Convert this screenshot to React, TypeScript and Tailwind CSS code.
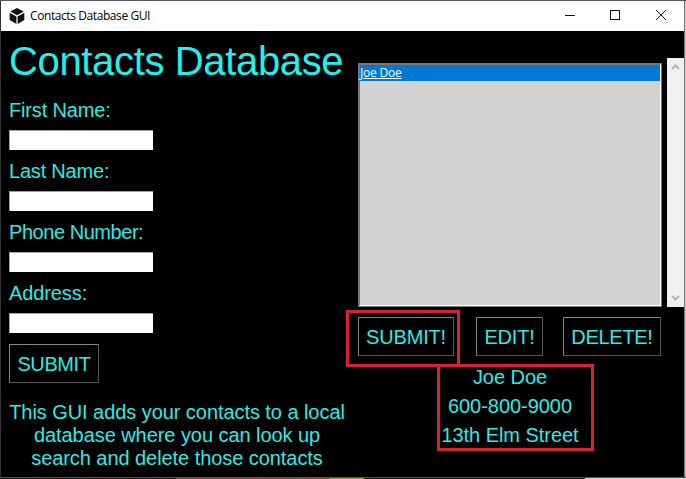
import React from "react";

function Field({ label, tracking }: { label: string; tracking: string }) {
  return (
    <label className="block h-[61px]">
      <span className={`block h-[33px] whitespace-nowrap pt-px text-[20px] leading-[24px] ${tracking}`}>{label}</span>
      <input className="block h-5 w-36 border-l border-t border-[#a0a0a0] bg-white px-1 text-sm text-black outline-none" />
    </label>
  );
}

function Button({ children, className }: { children: React.ReactNode; className: string }) {
  return (
    <button
      className={`flex h-[39px] shrink-0 items-center justify-center whitespace-nowrap border border-[#555] border-l-[#858585] border-t-[#858585] pt-px text-[20px] leading-6 ${className}`}
    >
      {children}
    </button>
  );
}

function TitleBar() {
  return (
    <header className="flex h-[30px] shrink-0 items-center bg-white pl-2 text-black">
      <svg className="h-4 w-4 shrink-0" viewBox="0 0 16 16">
        <path d="M8 0 14.7 3.6 8 7.3 1.3 3.6Z" fill="#111" />
        <path d="M.7 4.7 7.4 8.4V16L.7 12.1Z" fill="#111" />
        <path d="M15.3 4.7 8.6 8.4V16l6.7-3.9Z" fill="#111" />
      </svg>
      <h1 className="ml-[5px] grow whitespace-nowrap pb-px font-['Open_Sans',sans-serif] text-[12px] leading-4 tracking-[-0.41px]">
        Contacts Database GUI
      </h1>
      <svg className="h-[30px] w-[136px] shrink-0" viewBox="0 0 136 30" fill="none" stroke="#111" shapeRendering="crispEdges">
        <path d="M17 14.5h10" />
        <rect x="62.5" y="9.5" width="9" height="9" />
        <path d="m108 9 10 10m0-10-10 10" shapeRendering="auto" />
      </svg>
    </header>
  );
}

export default function App() {
  return (
    <div className="flex h-[479px] w-[686px] flex-col overflow-hidden bg-[#707070] font-['Liberation_Sans',Arial,sans-serif] text-[#2fe9e5]">
      <div className="h-px shrink-0 bg-[#555]" />
      <div className="flex h-[476px] shrink-0">
        <div className="w-px bg-[#333]" />
        <div className="flex w-[683px] flex-col bg-black">
          <TitleBar />
          <main className="relative flex grow">
            <section className="w-[349px] shrink-0 pl-2">
              <h2 className="h-[63px] whitespace-nowrap pt-[7px] text-[40px] leading-[46px] tracking-[-0.35px] text-[#20f1ef]">
                Contacts Database
              </h2>
              <div className="pt-[3px]">
                <Field label="First Name:" tracking="tracking-[-0.15px]" />
                <Field label="Last Name:" tracking="tracking-[-0.2px]" />
                <Field label="Phone Number:" tracking="tracking-[-0.45px]" />
                <Field label="Address:" tracking="tracking-[-0.1px]" />
              </div>
              <Button className="mt-[3px] w-[90px] tracking-[-0.4px]">SUBMIT</Button>
              <p className="mt-[18px] w-[336px] whitespace-nowrap text-center text-[20px] leading-[23px] tracking-[-0.06px]">
                <span className="block">This GUI adds your contacts to a local</span>
                <span className="block">database where you can look up</span>
                <span className="block">search and delete those contacts</span>
              </p>
            </section>
            <section className="flex w-[334px] flex-col pl-2">
              <div className="mt-[27px] flex h-[249px] w-[326px] justify-between">
                <div className="mt-[5px] h-[244px] w-[304px] border border-[#777]">
                  <div className="h-full border border-b-white border-l-[#777] border-r-white border-t-[#777] bg-[#d3d3d3]">
                    <div className="h-4 bg-[#0078d7] font-['Open_Sans',sans-serif] text-[12px] leading-4 tracking-[-0.2px] text-white underline">
                      Joe Doe
                    </div>
                  </div>
                </div>
                <div className="flex w-[17px] flex-col items-center justify-between bg-[#f0f0f0] py-[6px]">
                  <svg className="h-[6px] w-[9px]" viewBox="0 0 9 6" fill="none" stroke="#b3b3b3" strokeWidth="2">
                    <path d="m1 5 3.5-3.5L8 5" />
                  </svg>
                  <svg className="h-[6px] w-[9px]" viewBox="0 0 9 6" fill="none" stroke="#b3b3b3" strokeWidth="2">
                    <path d="m1 1 3.5 3.5L8 1" />
                  </svg>
                </div>
              </div>
              <div className="mt-[10px] flex w-[303px] justify-between">
                <Button className="w-24 tracking-[-0.15px]">SUBMIT!</Button>
                <Button className="ml-[2px] w-[67px] tracking-[-0.2px]">EDIT!</Button>
                <Button className="w-[98px] tracking-[-0.3px]">DELETE!</Button>
              </div>
              <div className="mt-[7px] w-[304px] whitespace-nowrap text-center text-[20px] leading-[29px] tracking-[-0.04px]">
                <div>Joe Doe</div>
                <div>600-800-9000</div>
                <div>13th Elm Street</div>
              </div>
            </section>
            <div className="pointer-events-none absolute left-[345px] top-[279px] h-[57px] w-[114px] border-[3px] border-[#d4252f]" />
            <div className="pointer-events-none absolute left-[436px] top-[333px] h-[87px] w-[157px] border-[3px] border-[#d4252f]" />
          </main>
        </div>
        <div className="w-px bg-[#777]" />
        <div className="w-px bg-[#c8c8c8]" />
      </div>
      <div className="h-px shrink-0 bg-[#555]" />
      <div className="flex h-px shrink-0">
        <div className="w-[176px] bg-[#151010]" />
        <div className="w-[154px] bg-[#744a38]" />
        <div className="w-[34px] bg-[#99983d]" />
        <div className="w-[221px] bg-[#101010]" />
        <div className="grow bg-[#d7d7d7]" />
      </div>
    </div>
  );
}
